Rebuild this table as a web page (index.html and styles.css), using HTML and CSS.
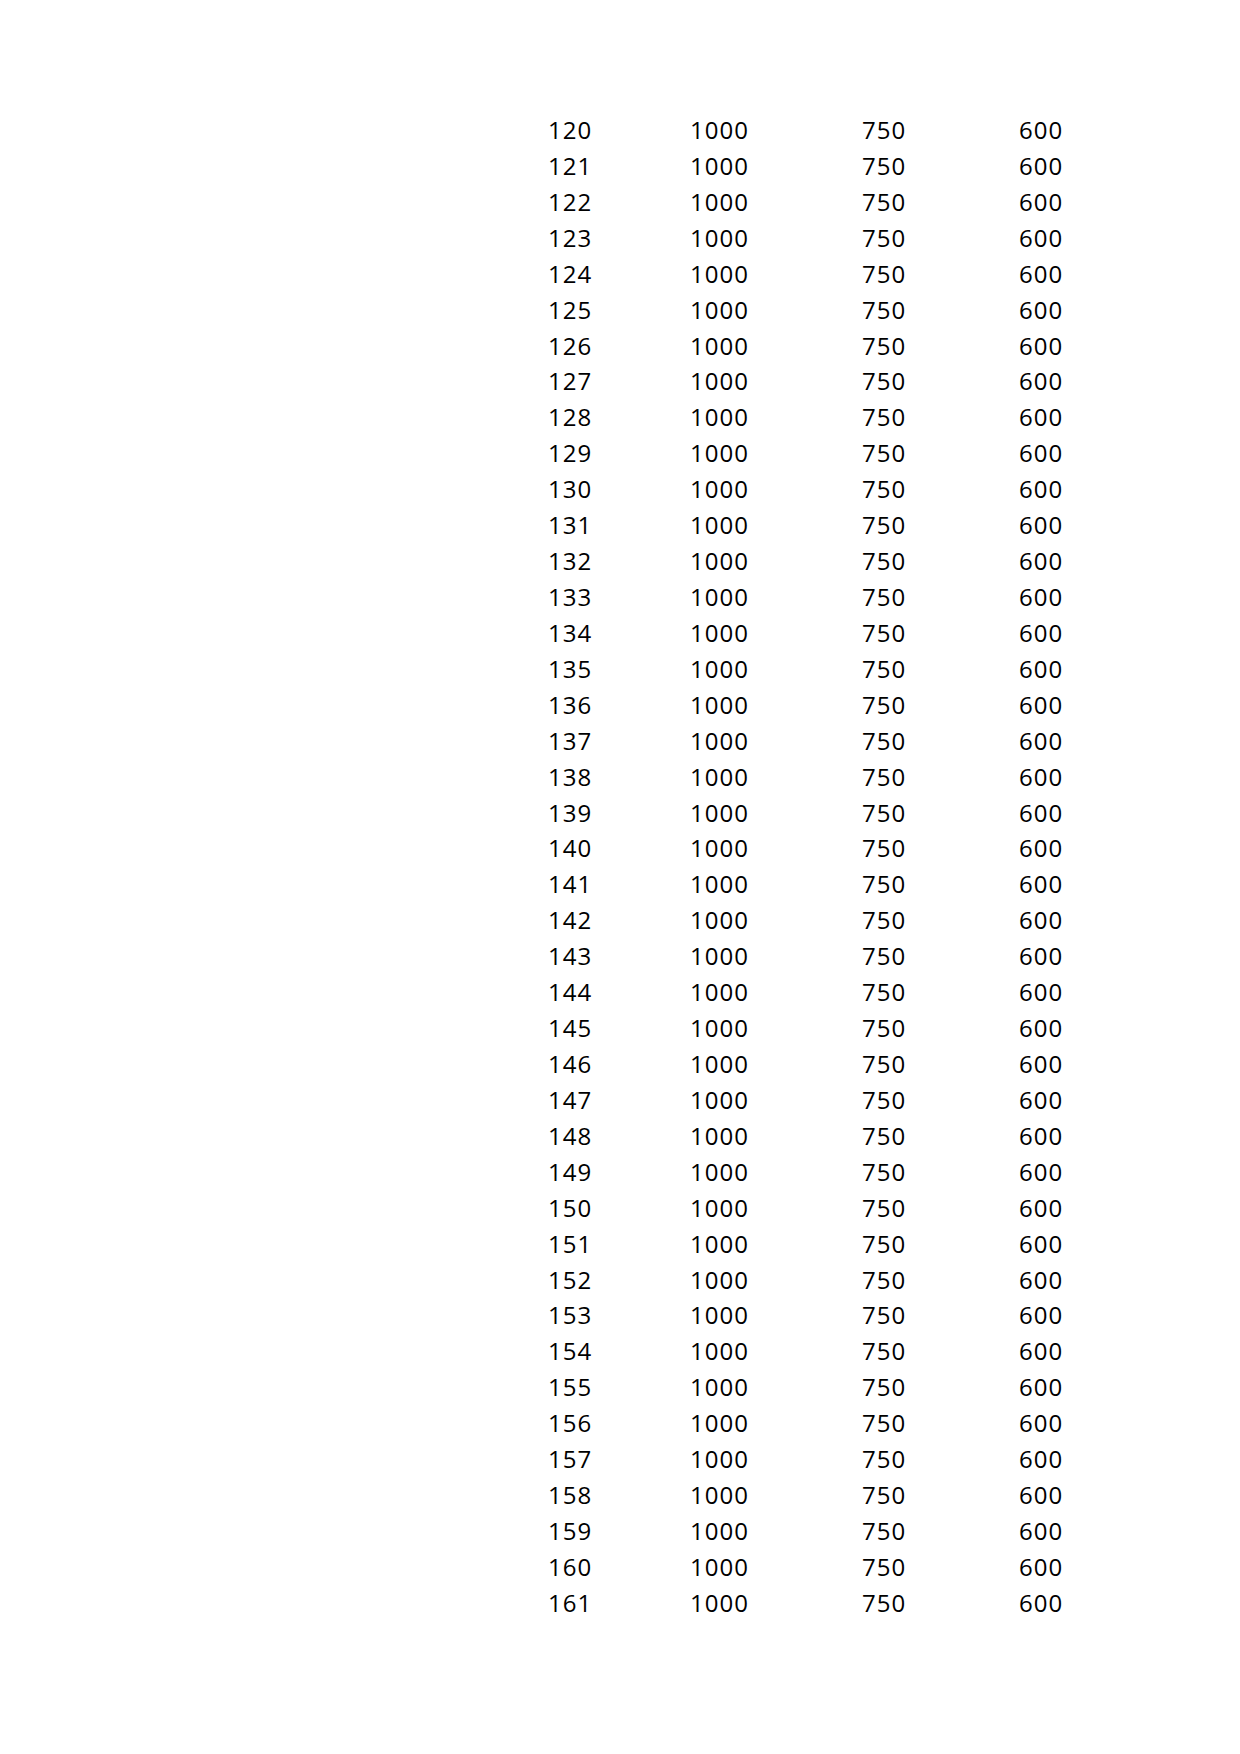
FILE: index.html
```html
<!DOCTYPE html>
<html>
<head>
<meta charset="utf-8">
<link rel="stylesheet" href="styles.css">
</head>
<body>
<div class="sheet">
<div class="row"><span>120</span><span>1000</span><span>750</span><span>600</span></div>
<div class="row"><span>121</span><span>1000</span><span>750</span><span>600</span></div>
<div class="row"><span>122</span><span>1000</span><span>750</span><span>600</span></div>
<div class="row"><span>123</span><span>1000</span><span>750</span><span>600</span></div>
<div class="row"><span>124</span><span>1000</span><span>750</span><span>600</span></div>
<div class="row"><span>125</span><span>1000</span><span>750</span><span>600</span></div>
<div class="row"><span>126</span><span>1000</span><span>750</span><span>600</span></div>
<div class="row"><span>127</span><span>1000</span><span>750</span><span>600</span></div>
<div class="row"><span>128</span><span>1000</span><span>750</span><span>600</span></div>
<div class="row"><span>129</span><span>1000</span><span>750</span><span>600</span></div>
<div class="row"><span>130</span><span>1000</span><span>750</span><span>600</span></div>
<div class="row"><span>131</span><span>1000</span><span>750</span><span>600</span></div>
<div class="row"><span>132</span><span>1000</span><span>750</span><span>600</span></div>
<div class="row"><span>133</span><span>1000</span><span>750</span><span>600</span></div>
<div class="row"><span>134</span><span>1000</span><span>750</span><span>600</span></div>
<div class="row"><span>135</span><span>1000</span><span>750</span><span>600</span></div>
<div class="row"><span>136</span><span>1000</span><span>750</span><span>600</span></div>
<div class="row"><span>137</span><span>1000</span><span>750</span><span>600</span></div>
<div class="row"><span>138</span><span>1000</span><span>750</span><span>600</span></div>
<div class="row"><span>139</span><span>1000</span><span>750</span><span>600</span></div>
<div class="row"><span>140</span><span>1000</span><span>750</span><span>600</span></div>
<div class="row"><span>141</span><span>1000</span><span>750</span><span>600</span></div>
<div class="row"><span>142</span><span>1000</span><span>750</span><span>600</span></div>
<div class="row"><span>143</span><span>1000</span><span>750</span><span>600</span></div>
<div class="row"><span>144</span><span>1000</span><span>750</span><span>600</span></div>
<div class="row"><span>145</span><span>1000</span><span>750</span><span>600</span></div>
<div class="row"><span>146</span><span>1000</span><span>750</span><span>600</span></div>
<div class="row"><span>147</span><span>1000</span><span>750</span><span>600</span></div>
<div class="row"><span>148</span><span>1000</span><span>750</span><span>600</span></div>
<div class="row"><span>149</span><span>1000</span><span>750</span><span>600</span></div>
<div class="row"><span>150</span><span>1000</span><span>750</span><span>600</span></div>
<div class="row"><span>151</span><span>1000</span><span>750</span><span>600</span></div>
<div class="row"><span>152</span><span>1000</span><span>750</span><span>600</span></div>
<div class="row"><span>153</span><span>1000</span><span>750</span><span>600</span></div>
<div class="row"><span>154</span><span>1000</span><span>750</span><span>600</span></div>
<div class="row"><span>155</span><span>1000</span><span>750</span><span>600</span></div>
<div class="row"><span>156</span><span>1000</span><span>750</span><span>600</span></div>
<div class="row"><span>157</span><span>1000</span><span>750</span><span>600</span></div>
<div class="row"><span>158</span><span>1000</span><span>750</span><span>600</span></div>
<div class="row"><span>159</span><span>1000</span><span>750</span><span>600</span></div>
<div class="row"><span>160</span><span>1000</span><span>750</span><span>600</span></div>
<div class="row"><span>161</span><span>1000</span><span>750</span><span>600</span></div>
</div>
</body>
</html>
```
FILE: styles.css
```css
html, body {
  margin: 0;
  padding: 0;
  background: #ffffff;
}
body {
  font-family: "Open Sans", "Noto Sans", sans-serif;
  font-size: 24px;
  letter-spacing: 1px;
  color: #000000;
}
.sheet {
  padding-top: 112px;
  padding-left: 548px;
}
.row {
  display: grid;
  grid-template-columns: 142px 172px 157px auto;
  height: 35.93px;
  line-height: 35.93px;
}
```
